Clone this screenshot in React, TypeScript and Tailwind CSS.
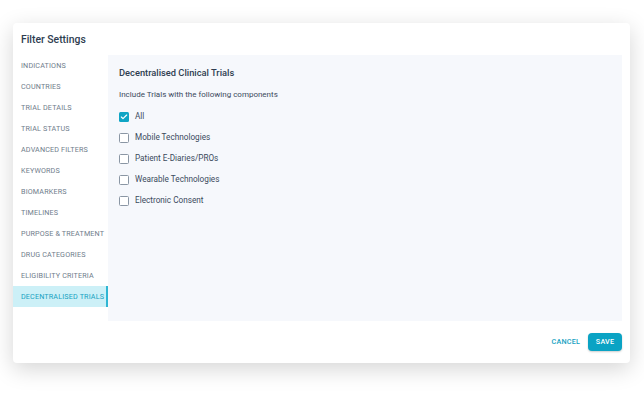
import { Check } from "lucide-react"

const navItems = [
  "Indications",
  "Countries",
  "Trial Details",
  "Trial Status",
  "Advanced Filters",
  "Keywords",
  "Biomarkers",
  "Timelines",
  "Purpose & Treatment",
  "Drug Categories",
  "Eligibility Criteria",
  "Decentralised Trials",
]

const options = [
  { label: "All", checked: true },
  { label: "Mobile Technologies", checked: false },
  { label: "Patient E-Diaries/PROs", checked: false },
  { label: "Wearable Technologies", checked: false },
  { label: "Electronic Consent", checked: false },
]

export default function App() {
  return (
    <div className="h-[396px] w-[644px] bg-white pl-[13px] pt-[23px] font-['Roboto',sans-serif]">
      <div className="flex h-[340px] w-[617px] flex-col rounded-[4px] bg-white shadow-[0_6px_22px_rgba(0,0,0,0.17)]">
        {/* Header */}
        <div className="flex h-[32px] items-center px-[8px] pt-[1px]">
          <h2 className="text-[10.4px] font-medium text-[#2e3d50]">Filter Settings</h2>
        </div>

        {/* Body */}
        <div className="flex h-[266px] pr-[8px]">
          <ul className="w-[95px] shrink-0">
            {navItems.map((item) => {
              const active = item === "Decentralised Trials"
              return (
                <li
                  key={item}
                  className={
                    active
                      ? "flex h-[21px] items-center whitespace-nowrap border-r-2 border-[#2fb6d3] bg-[#ccf0f7] pl-[8px] pt-[1px] text-[7.2px] uppercase tracking-[0.15px] text-[#16a2c2]"
                      : "flex h-[21px] items-center whitespace-nowrap pl-[8px] pt-[1px] text-[7.2px] uppercase tracking-[0.15px] text-[#6f7c8b]"
                  }
                >
                  {item}
                </li>
              )
            })}
          </ul>

          <div className="flex-1 bg-[#f6f8fc] px-[11px] pt-[11px]">
            <h3 className="text-[9.3px] leading-[14px] font-medium text-[#2e3d50]">Decentralised Clinical Trials</h3>
            <p className="mt-[9px] text-[8px] leading-[12px] text-[#3b4a5c]">Include Trials with the following components</p>
            <div className="mt-[5px] flex flex-col">
              {options.map((o) => (
                <label key={o.label} className="flex h-[21px] items-center gap-[6px]">
                  {o.checked ? (
                    <span className="flex h-[10px] w-[10px] items-center justify-center rounded-[1.5px] bg-[#10a5c5]">
                      <Check className="h-[8px] w-[8px] text-white" strokeWidth={3.5} />
                    </span>
                  ) : (
                    <span className="h-[10px] w-[10px] rounded-[1.5px] border border-[#8a96a4] bg-white" />
                  )}
                  <span className="text-[8.2px] text-[#3b4a5c]">{o.label}</span>
                </label>
              ))}
            </div>
          </div>
        </div>

        {/* Footer */}
        <div className="flex flex-1 items-center justify-end gap-[8px] pr-[8px]">
          <button className="text-[7.2px] font-medium uppercase tracking-[0.2px] text-[#16a2c2]">Cancel</button>
          <button className="h-[18px] w-[34px] rounded-[4px] bg-[#0aa3c4] text-[7.2px] font-medium uppercase tracking-[0.2px] text-white shadow-[0_1px_2px_rgba(0,0,0,0.2)]">
            Save
          </button>
        </div>
      </div>
    </div>
  )
}
